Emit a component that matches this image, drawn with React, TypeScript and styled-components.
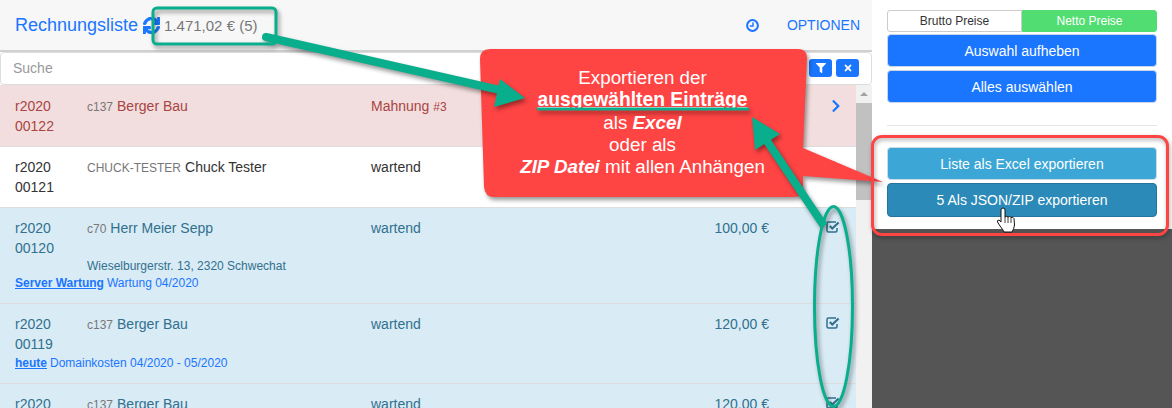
import React from "react";
import styled, { createGlobalStyle } from "styled-components";
import { FaChevronRight, FaFilter, FaSync, FaTimes } from "react-icons/fa";

const GREEN = "#09ae8c";
const RED = "#ff4444";
const BLUE = "#1a75ff";

const Global = createGlobalStyle`
  html, body {
    margin: 0;
    padding: 0;
    background: #fff;
    font-family: "Liberation Sans", Arial, sans-serif;
    font-size: 14px;
    color: #333;
  }
`;

const Page = styled("div")`
  position: relative;
  display: flex;
  width: 1172px;
  height: 408px;
  overflow: hidden;
`;

const Main = styled("div")`
  display: flex;
  flex-direction: column;
  width: 872px;
  height: 408px;
`;

const Header = styled("div")`
  display: flex;
  align-items: center;
  height: 50px;
  padding: 0 12px 0 15px;
  background: #f7f7f7;
  border-bottom: 2px solid #d0d0d0;
  flex-shrink: 0;
`;

const Title = styled("span")`
  font-size: 18px;
  color: ${BLUE};
`;

const RefreshIcon = styled("span")`
  display: flex;
  margin-left: 5px;
  font-size: 17px;
  color: ${BLUE};

  svg {
    stroke: ${BLUE};
    stroke-width: 30;
  }
`;

const Amount = styled("span")`
  margin-left: 4px;
  font-size: 15px;
  color: #777;
`;

const HeaderRight = styled("div")`
  display: flex;
  align-items: center;
  gap: 28px;
  margin-left: auto;
  color: ${BLUE};
`;

const SearchBar = styled("div")`
  position: relative;
  height: 33px;
  flex-shrink: 0;
  box-sizing: border-box;
  background: #fff;
  border: 1px solid #ddd;
  border-radius: 4px;
  padding: 0 12px;
  line-height: 31px;
  color: #999;
`;

const SearchActions = styled("div")`
  position: absolute;
  top: 6px;
  right: 12px;
  display: flex;
  gap: 4px;
`;

const TinyButton = styled("span")`
  display: flex;
  align-items: center;
  justify-content: center;
  width: 23px;
  height: 18px;
  border-radius: 3px;
  background: ${BLUE};
  color: #fff;
  font-size: 10px;
`;

const ListArea = styled("div")`
  display: flex;
  flex: 1;
  min-height: 0;
  overflow: hidden;
`;

const List = styled("div")`
  flex: 1;
  min-width: 0;
`;

const Scrollbar = styled("div")`
  display: flex;
  flex-direction: column;
  width: 16px;
  background: #f1f1f1;
  flex-shrink: 0;
`;

const ScrollUp = styled("div")`
  height: 18px;
  display: flex;
  align-items: center;
  justify-content: center;

  &::before {
    content: "";
    border-left: 4px solid transparent;
    border-right: 4px solid transparent;
    border-bottom: 4px solid #a3a3a3;
  }
`;

const ScrollThumb = styled("div")`
  height: 97px;
  background: #c1c1c1;
`;

const Row = styled("div")<{ $tone: "danger" | "plain" | "info" }>`
  box-sizing: border-box;
  padding: 10px 15px;
  border-bottom: 1px solid #ddd;
  line-height: 20px;
  background: ${(p) =>
    p.$tone === "danger" ? "#f2dede" : p.$tone === "info" ? "#d9ebf5" : "#fff"};
  color: ${(p) =>
    p.$tone === "danger" ? "#a94442" : p.$tone === "info" ? "#31708f" : "#333"};

  &:first-child {
    padding-top: 11px;
  }
`;

const RowMain = styled("div")`
  display: grid;
  grid-template-columns: 72px 284px 200px 198px 1fr;
`;

const Customer = styled("div")``;

const CustomerCode = styled("span")`
  font-size: 12px;
  color: #777;
  margin-right: 4px;
`;

const DunningLevel = styled("span")`
  font-size: 12px;
`;

const Price = styled("div")`
  text-align: right;
`;

const RowIcon = styled("div")<{ $color?: string }>`
  display: flex;
  justify-content: flex-end;
  padding: 3px 1px 0 0;
  font-size: 14px;
  color: ${(p) => p.$color || "inherit"};
`;

const Chevron = styled(FaChevronRight)`
  margin-right: -3px;
`;

const Address = styled("div")`
  margin-left: 72px;
  font-size: 12px;
  line-height: 16px;
`;

const Note = styled("div")`
  font-size: 12px;
  line-height: 16px;
  margin-top: 1px;
  padding-bottom: 2px;
  color: ${BLUE};
`;

const NoteLink = styled("a")`
  font-weight: bold;
  text-decoration: underline;
  color: ${BLUE};
  margin-right: 3px;
`;

const Sidebar = styled("div")`
  display: flex;
  flex-direction: column;
  width: 300px;
  height: 408px;
`;

const SidebarBody = styled("div")`
  box-sizing: border-box;
  height: 229px;
  padding: 10px 15px 0;
  background: #fff;
`;

const SidebarDark = styled("div")`
  flex: 1;
  background: #555;
`;

const Toggle = styled("div")`
  display: flex;
  height: 22px;
  margin-bottom: 2px;
`;

const ToggleItem = styled("div")<{ $active?: boolean }>`
  flex: 1;
  box-sizing: border-box;
  text-align: center;
  font-size: 12px;
  line-height: 20px;
  border: 1px solid ${(p) => (p.$active ? "#52dd72" : "#ccc")};
  border-radius: ${(p) => (p.$active ? "0 3px 3px 0" : "3px 0 0 3px")};
  background: ${(p) => (p.$active ? "#52dd72" : "#fff")};
  color: ${(p) => (p.$active ? "#fff" : "#333")};
`;

const ActionButton = styled("div")<{ $variant: "primary" | "info" | "infoDark"; $h: number }>`
  box-sizing: border-box;
  height: ${(p) => p.$h}px;
  line-height: ${(p) => p.$h - 1}px;
  margin-bottom: 3px;
  text-align: center;
  font-size: 14px;
  color: #fff;
  border-radius: 4px;
  border: 1px solid
    ${(p) =>
      p.$variant === "primary" ? "#c9d6e8" : p.$variant === "info" ? "#c8dbe6" : "#23749f"};
  background: ${(p) =>
    p.$variant === "primary" ? BLUE : p.$variant === "info" ? "#3ca6d6" : "#2b8ab8"};
`;

const Divider = styled("div")`
  height: 1px;
  margin: 22px 0 21px;
  background: #e6e6e6;
`;

const Overlay = styled("svg")`
  position: absolute;
  left: 0;
  top: 0;
  pointer-events: none;
`;

const Callout = styled("div")`
  position: absolute;
  left: 480px;
  top: 67px;
  width: 325px;
  text-align: center;
  color: #fff;
  font-size: 18.8px;
  line-height: 22.3px;
`;

const CalloutStrong = styled("span")`
  font-size: 19.3px;
  font-weight: bold;
  text-decoration: underline;
`;

const CalloutEm = styled("span")`
  font-weight: bold;
  font-style: italic;
`;

const ExportFrame = styled("div")`
  position: absolute;
  left: 871px;
  top: 135px;
  width: 298px;
  height: 101px;
  box-sizing: border-box;
  border: 3px solid ${RED};
  border-radius: 11px;
  filter: drop-shadow(1px 2px 2px rgba(0, 0, 0, 0.35));
`;

const shadow = { filter: "drop-shadow(2px 3px 2px rgba(0,0,0,0.4))" };

const ClockIcon = () => (
  <svg width="13" height="13" viewBox="0 0 13 13" fill="none" stroke="currentColor">
    <circle cx="6.5" cy="6.5" r="5.4" strokeWidth="2" />
    <path d="M7 3.200 V7 H3.800" strokeWidth="1.400" />
  </svg>
);

// fa-check-square-o: box open at the top right, check sticking out
const CheckIcon = () => (
  <svg width="14" height="12" viewBox="0 0 14 12" fill="none" stroke="currentColor">
    <path
      d="M10 1 H2.500 Q1 1 1 2.500 V9.500 Q1 11 2.500 11 H9.500 Q11 11 11 9.500 V7"
      strokeWidth="1.500"
    />
    <path d="M3.800 5 L6.300 7.500 L12.600 1.500" strokeWidth="2.200" />
  </svg>
);

const Annotations = () => (
  <>
    {/* red speech bubble */}
    <Overlay width="1172" height="408" style={shadow}>
      <path
        d="M490 49 L798 49 Q807 49 807 58 L803 148 L883 182 L803 176 L803 187 Q803 197 793 197 L494 197 Q485 197 484 187 L480 59 Q480 49 490 49 Z"
        fill={RED}
      />
    </Overlay>
    <Callout>
      Exportieren der
      <br />
      <CalloutStrong>ausgewählten Einträge</CalloutStrong>
      <br />
      als <CalloutEm>Excel</CalloutEm>
      <br />
      oder als
      <br />
      <CalloutEm>ZIP Datei</CalloutEm> mit allen Anhängen
    </Callout>
    <ExportFrame />
    {/* green markers and arrows */}
    <Overlay width="1172" height="408" style={shadow}>
      <rect x="153" y="8" width="123" height="36" rx="4" fill="none" stroke={GREEN} strokeWidth="3" />
      <path d="M266 37 L500 90" stroke={GREEN} strokeWidth="8" strokeLinecap="round" fill="none" />
      <polygon points="525,98 500,79 494,107" fill={GREEN} />
      <path d="M537 109 L749 109" stroke={GREEN} strokeWidth="3" fill="none" />
      <path d="M824 226 L767 141" stroke={GREEN} strokeWidth="8" fill="none" />
      <polygon points="752,117 780,134 755,150" fill={GREEN} />
      <ellipse cx="833.5" cy="306.5" rx="19" ry="100" fill="none" stroke={GREEN} strokeWidth="3" />
    </Overlay>
    {/* hand cursor */}
    <Overlay width="1172" height="408">
      <path
        d="M1001 210 Q1001 208 1003 208 Q1005 208 1005 210 L1005 217 Q1007 215.500 1008 217 Q1010 215.500 1011 217.500 Q1013 216.500 1014 218.500 L1014.500 225 Q1014 229 1012 232 L1004 232 Q1003 229.500 1000 226 L997.500 222 Q997 220 999 220 L1001 222 Z"
        fill="#fff"
        stroke="#111"
        strokeWidth="1"
      />
      <path d="M1005 217 V223 M1008 217 V223 M1011 218 V223" stroke="#111" strokeWidth="0.8" />
    </Overlay>
  </>
);

const App = () => (
  <>
    <Global />
    <Page>
      <Main>
        <Header>
          <Title>Rechnungsliste</Title>
          <RefreshIcon>
            <FaSync />
          </RefreshIcon>
          <Amount>1.471,02 € (5)</Amount>
          <HeaderRight>
            <ClockIcon />
            <span>OPTIONEN</span>
          </HeaderRight>
        </Header>
        <SearchBar>
          Suche
          <SearchActions>
            <TinyButton>
              <FaFilter />
            </TinyButton>
            <TinyButton>
              <FaTimes />
            </TinyButton>
          </SearchActions>
        </SearchBar>
        <ListArea>
          <List>
            <Row $tone="danger">
              <RowMain>
                <div>
                  r2020
                  <br />
                  00122
                </div>
                <Customer>
                  <CustomerCode>c137</CustomerCode>Berger Bau
                </Customer>
                <div>
                  Mahnung <DunningLevel>#3</DunningLevel>
                </div>
                <Price />
                <RowIcon $color={BLUE}>
                  <Chevron />
                </RowIcon>
              </RowMain>
            </Row>
            <Row $tone="plain">
              <RowMain>
                <div>
                  r2020
                  <br />
                  00121
                </div>
                <Customer>
                  <CustomerCode>CHUCK-TESTER</CustomerCode>Chuck Tester
                </Customer>
                <div>wartend</div>
                <Price />
                <RowIcon $color={BLUE}>
                  <Chevron />
                </RowIcon>
              </RowMain>
            </Row>
            <Row $tone="info">
              <RowMain>
                <div>
                  r2020
                  <br />
                  00120
                </div>
                <Customer>
                  <CustomerCode>c70</CustomerCode>Herr Meier Sepp
                </Customer>
                <div>wartend</div>
                <Price>100,00 €</Price>
                <RowIcon>
                  <CheckIcon />
                </RowIcon>
              </RowMain>
              <Address>Wieselburgerstr. 13, 2320 Schwechat</Address>
              <Note>
                <NoteLink>Server Wartung</NoteLink>Wartung 04/2020
              </Note>
            </Row>
            <Row $tone="info">
              <RowMain>
                <div>
                  r2020
                  <br />
                  00119
                </div>
                <Customer>
                  <CustomerCode>c137</CustomerCode>Berger Bau
                </Customer>
                <div>wartend</div>
                <Price>120,00 €</Price>
                <RowIcon>
                  <CheckIcon />
                </RowIcon>
              </RowMain>
              <Note>
                <NoteLink>heute</NoteLink>Domainkosten 04/2020 - 05/2020
              </Note>
            </Row>
            <Row $tone="info">
              <RowMain>
                <div>
                  r2020
                  <br />
                  00118
                </div>
                <Customer>
                  <CustomerCode>c137</CustomerCode>Berger Bau
                </Customer>
                <div>wartend</div>
                <Price>120,00 €</Price>
                <RowIcon>
                  <CheckIcon />
                </RowIcon>
              </RowMain>
            </Row>
          </List>
          <Scrollbar>
            <ScrollUp />
            <ScrollThumb />
          </Scrollbar>
        </ListArea>
      </Main>
      <Sidebar>
        <SidebarBody>
          <Toggle>
            <ToggleItem>Brutto Preise</ToggleItem>
            <ToggleItem $active>Netto Preise</ToggleItem>
          </Toggle>
          <ActionButton $variant="primary" $h={33}>
            Auswahl aufheben
          </ActionButton>
          <ActionButton $variant="primary" $h={33}>
            Alles auswählen
          </ActionButton>
          <Divider />
          <ActionButton $variant="info" $h={33}>
            Liste als Excel exportieren
          </ActionButton>
          <ActionButton $variant="infoDark" $h={34}>
            5 Als JSON/ZIP exportieren
          </ActionButton>
        </SidebarBody>
        <SidebarDark />
      </Sidebar>
      <Annotations />
    </Page>
  </>
);

export default App;
